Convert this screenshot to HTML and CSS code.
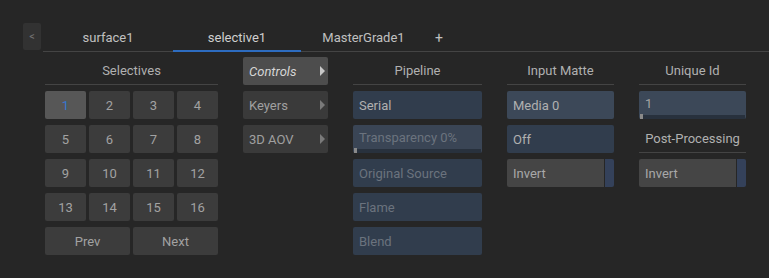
FILE: index.html
```html
<!DOCTYPE html>
<html lang="en">
<head>
  <meta charset="UTF-8" />
  <title>Selective</title>
  <link rel="stylesheet" href="styles.css">
</head>
<body>
  <div class="top-bar">
    <div class="btn-back">&lt;</div>
    <div class="tabs">
      <div class="tab tab-surface">surface1</div>
      <div class="tab tab-selective active">selective1</div>
      <div class="tab tab-master">MasterGrade1</div>
      <div class="tab tab-add">+</div>
    </div>
  </div>

  <div class="panel">
    <div class="col col-selectives">
      <div class="col-head">Selectives</div>
      <div class="sel-grid">
        <div class="cell selected">1</div>
        <div class="cell">2</div>
        <div class="cell">3</div>
        <div class="cell">4</div>
        <div class="cell">5</div>
        <div class="cell">6</div>
        <div class="cell">7</div>
        <div class="cell">8</div>
        <div class="cell">9</div>
        <div class="cell">10</div>
        <div class="cell">11</div>
        <div class="cell">12</div>
        <div class="cell">13</div>
        <div class="cell">14</div>
        <div class="cell">15</div>
        <div class="cell">16</div>
        <div class="cell wide">Prev</div>
        <div class="cell wide">Next</div>
      </div>
    </div>

    <div class="col col-menu">
      <div class="menu-item active">Controls<span class="arrow"></span></div>
      <div class="menu-item">Keyers<span class="arrow"></span></div>
      <div class="menu-item">3D AOV<span class="arrow"></span></div>
    </div>

    <div class="col col-pipeline">
      <div class="col-head">Pipeline</div>
      <div class="field">Serial</div>
      <div class="field slider dim">
        <span class="slider-label">Transparency 0%</span>
        <span class="track"><span class="handle"></span></span>
      </div>
      <div class="field dim">Original Source</div>
      <div class="field dim">Flame</div>
      <div class="field dim">Blend</div>
    </div>

    <div class="col col-matte">
      <div class="col-head">Input Matte</div>
      <div class="field light">Media 0</div>
      <div class="field">Off</div>
      <div class="toggle">
        <span class="toggle-label">Invert</span>
        <span class="toggle-state"></span>
      </div>
    </div>

    <div class="col col-unique">
      <div class="col-head">Unique Id</div>
      <div class="field slider light">
        <span class="slider-label">1</span>
        <span class="track"><span class="handle"></span></span>
      </div>
      <div class="col-head">Post-Processing</div>
      <div class="toggle">
        <span class="toggle-label">Invert</span>
        <span class="toggle-state"></span>
      </div>
    </div>
  </div>
</body>
</html>
```

FILE: styles.css
```css
body {
  font-family: Roboto, 'Noto Sans', sans-serif;
  font-size: 13px;
  background-color: #262626;
  color: #a6a6a6;
  margin: 0;
  padding: 23px 0 0 23px;
}

/* top tabs */

.top-bar {
  display: flex;
  align-items: flex-start;
}

.btn-back {
  width: 18px;
  height: 27px;
  margin-right: 2px;
  background-color: #323232;
  border-radius: 2px;
  color: #6f6f6f;
  font-size: 11px;
  display: flex;
  align-items: center;
  justify-content: center;
}

.tabs {
  flex: 1;
  display: flex;
  height: 28px;
  border-bottom: 1px solid #444444;
}

.tab {
  box-sizing: border-box;
  height: 29px;
  margin-bottom: -1px;
  padding-top: 2px;
  border-bottom: 2px solid transparent;
  display: flex;
  align-items: center;
  justify-content: center;
  color: #c0c0c0;
}

.tab.active {
  border-bottom-color: #2d6cc0;
  color: #cfcfcf;
}

.tab-surface { width: 130px; }
.tab-selective { width: 128px; }
.tab-master { width: 125px; }
.tab-add { width: 26px; font-size: 14px; }

/* panel */

.panel {
  display: flex;
  gap: 25px;
  margin: 5px 0 0 22px;
}

.col {
  display: flex;
  flex-direction: column;
  gap: 6px;
}

.col-selectives { width: 173px; }
.col-menu { width: 85px; }
.col-pipeline { width: 129px; }
.col-matte { width: 107px; }
.col-unique { width: 107px; }

.col-head {
  height: 27px;
  border-bottom: 1px solid #444444;
  display: flex;
  align-items: center;
  justify-content: center;
  color: #b0b0b0;
}

.sel-grid {
  display: grid;
  grid-template-columns: repeat(4, 1fr);
  column-gap: 3px;
  row-gap: 6px;
}

.cell {
  height: 28px;
  background-color: #3c3c3c;
  border-radius: 2px;
  display: flex;
  align-items: center;
  justify-content: center;
  color: #a2a2a2;
}

.cell.wide {
  grid-column: span 2;
}

.cell.selected {
  background-color: #575757;
  color: #3577d0;
}

.menu-item {
  position: relative;
  height: 28px;
  padding-left: 6px;
  background-color: #3a3a3a;
  border-radius: 2px;
  display: flex;
  align-items: center;
  color: #a0a0a0;
}

.menu-item.active {
  background-color: #4d4d4d;
  color: #d6d6d6;
  font-style: italic;
}

.arrow {
  position: absolute;
  right: 3px;
  top: 9px;
  width: 0;
  height: 0;
  border-top: 5px solid transparent;
  border-bottom: 5px solid transparent;
  border-left: 5px solid #7a7a7a;
}

.menu-item.active .arrow {
  border-left-color: #c8c8c8;
}

.field {
  box-sizing: border-box;
  height: 28px;
  padding-left: 6px;
  background-color: #313d4d;
  border-radius: 2px;
  display: flex;
  align-items: center;
  color: #b0b0b0;
}

.field.light {
  background-color: #3c4858;
}

.field.dim {
  color: #6b737e;
}

.field.slider {
  flex-direction: column;
  align-items: stretch;
  padding-left: 0;
}

.field.slider.dim {
  background-color: #3a4555;
}

.slider-label {
  flex: 1;
  padding-left: 6px;
  display: flex;
  align-items: center;
}

.track {
  position: relative;
  height: 4px;
  margin: 0 1px;
  background-color: #28313d;
}

.handle {
  position: absolute;
  left: 0;
  bottom: 0;
  width: 3px;
  height: 5px;
  background-color: #8a8a8a;
}

.col-unique .slider-label {
  color: #a4a4a4;
}

.toggle {
  display: flex;
  gap: 1px;
  height: 28px;
}

.toggle-label {
  flex: 1;
  padding-left: 6px;
  background-color: #454545;
  border-radius: 2px 0 0 2px;
  display: flex;
  align-items: center;
  color: #a8a8a8;
}

.toggle-state {
  width: 9px;
  background-color: #34415a;
  border-radius: 0 2px 2px 0;
}
```
